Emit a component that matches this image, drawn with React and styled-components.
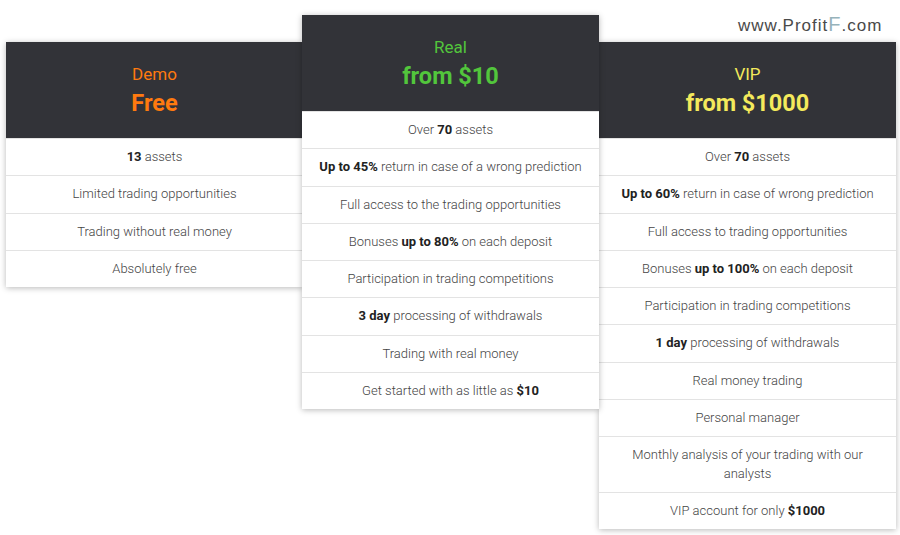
import styled, { createGlobalStyle } from 'styled-components'

const GlobalStyle = createGlobalStyle`
  body {
    margin: 0;
    background: #fff;
    font-family: Roboto, 'Liberation Sans', sans-serif;
  }
`

const plans = [
  {
    id: 'demo',
    name: 'Demo',
    price: 'Free',
    color: '#ff7a0f',
    items: [
      [<b key="b">13</b>, ' assets'],
      ['Limited trading opportunities'],
      ['Trading without real money'],
      ['Absolutely free'],
    ],
  },
  {
    id: 'real',
    name: 'Real',
    price: 'from $10',
    color: '#52c63c',
    raised: true,
    items: [
      ['Over ', <b key="b">70</b>, ' assets'],
      [<b key="b">Up to 45%</b>, ' return in case of a wrong prediction'],
      ['Full access to the trading opportunities'],
      ['Bonuses ', <b key="b">up to 80%</b>, ' on each deposit'],
      ['Participation in trading competitions'],
      [<b key="b">3 day</b>, ' processing of withdrawals'],
      ['Trading with real money'],
      ['Get started with as little as ', <b key="b">$10</b>],
    ],
  },
  {
    id: 'vip',
    name: 'VIP',
    price: 'from $1000',
    color: '#f4ea5c',
    items: [
      ['Over ', <b key="b">70</b>, ' assets'],
      [<b key="b">Up to 60%</b>, ' return in case of wrong prediction'],
      ['Full access to trading opportunities'],
      ['Bonuses ', <b key="b">up to 100%</b>, ' on each deposit'],
      ['Participation in trading competitions'],
      [<b key="b">1 day</b>, ' processing of withdrawals'],
      ['Real money trading'],
      ['Personal manager'],
      ['Monthly analysis of your trading with our analysts'],
      ['VIP account for only ', <b key="b">$1000</b>],
    ],
  },
]

const Page = styled.div`
  position: relative;
  width: 900px;
  height: 535px;
  overflow: hidden;
`

const Plans = styled.div`
  display: flex;
  align-items: flex-start;
  padding: 42px 0 0 6px;
`

const Card = styled.div`
  position: relative;
  z-index: ${p => (p.$raised ? 2 : 1)};
  width: 297px;
  margin-top: ${p => (p.$raised ? '-27px' : '0')};
  margin-left: ${p => (p.$raised ? '-1px' : '0')};
  background: #fff;
  box-shadow: 0 1px 6px rgba(0, 0, 0, 0.28);
`

const Header = styled.div`
  display: flex;
  flex-direction: column;
  align-items: center;
  height: 96px;
  box-sizing: border-box;
  padding-top: 22px;
  background: #323338;
  color: ${p => p.$color};
`

const Name = styled.div`
  font-size: 17px;
  line-height: 20px;
`

const Price = styled.div`
  margin-top: 5px;
  font-size: 23.5px;
  line-height: 28px;
  font-weight: 700;
`

const Row = styled.div`
  padding: 9px 12px;
  border-top: 1px solid #e3e3e3;
  font-size: 13px;
  line-height: 18.3px;
  font-weight: 300;
  color: #444;
  text-align: center;

  &:first-of-type {
    border-top: none;
  }

  b {
    font-weight: 700;
    color: #222;
  }
`

const Watermark = styled.div`
  position: absolute;
  top: 13px;
  left: 738px;
  font-family: 'Liberation Sans', Arial, sans-serif;
  font-size: 17px;
  letter-spacing: 1px;
  color: #4a4a4a;

  span {
    color: #96b3bb;
    font-size: 20px;
  }
`

export default function App() {
  return (
    <Page>
      <GlobalStyle />
      <Plans>
        {plans.map(plan => (
          <Card key={plan.id} $raised={plan.raised}>
            <Header $color={plan.color}>
              <Name>{plan.name}</Name>
              <Price>{plan.price}</Price>
            </Header>
            {plan.items.map((parts, i) => (
              <Row key={i}>{parts}</Row>
            ))}
          </Card>
        ))}
      </Plans>
      <Watermark>
        www.Profit<span>F</span>.com
      </Watermark>
    </Page>
  )
}
